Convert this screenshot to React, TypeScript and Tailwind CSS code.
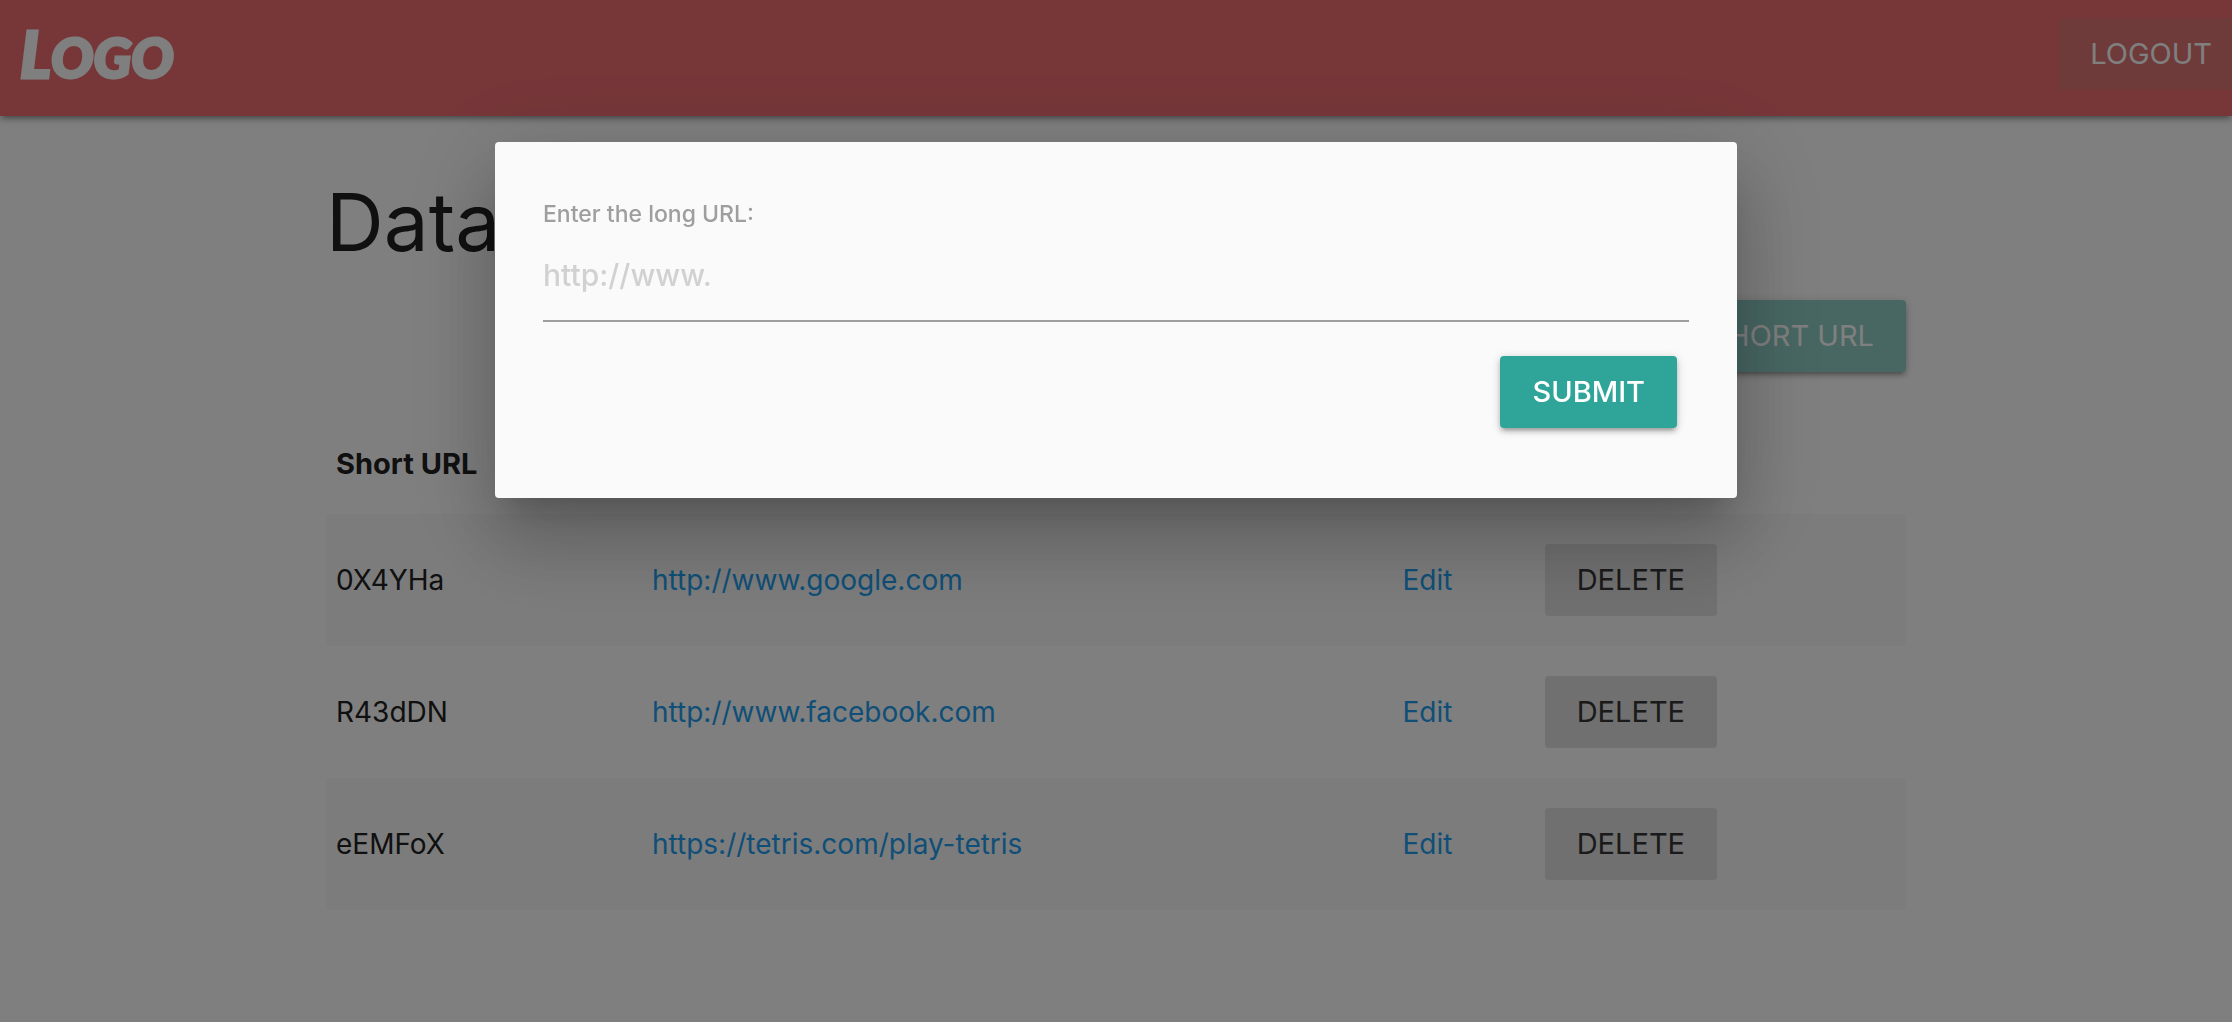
const links = [
  { code: '0X4YHa', url: 'http://www.google.com' },
  { code: 'R43dDN', url: 'http://www.facebook.com' },
  { code: 'eEMFoX', url: 'https://tetris.com/play-tetris' },
];

const raised =
  'shadow-[0_4px_4px_0_rgba(0,0,0,0.14),0_6px_2px_-4px_rgba(0,0,0,0.12),0_2px_10px_0_rgba(0,0,0,0.2)]';

function Header() {
  return (
    <header className={`flex h-29 items-start justify-between bg-[#ee6e73] text-white ${raised}`}>
      <a
        href="#"
        className="block pt-4 pl-5 font-['Lato'] text-[56px] leading-[76px] font-black uppercase italic [-webkit-text-stroke:3px_white] [paint-order:stroke_fill] first-letter:text-[64px]"
      >
        Logo
      </a>
      <button
        type="button"
        className="mt-[18px] h-18 rounded-l bg-[#de7674] pr-5 pl-8 text-[29px] uppercase"
      >
        Logout
      </button>
    </header>
  );
}

function LinkTable() {
  return (
    <table className="w-full table-fixed border-collapse text-left text-[28px] leading-[44px]">
      <colgroup>
        <col className="w-[20%]" />
        <col className="w-[47.5%]" />
        <col className="w-[9%]" />
        <col />
      </colgroup>
      <thead>
        <tr>
          <th scope="col" className="px-2.5 py-7 text-[29px] font-bold">Short URL</th>
          <th />
          <th />
          <th />
        </tr>
      </thead>
      <tbody>
        {links.map((link) => (
          <tr key={link.code} className="odd:bg-[#f8f8f8]">
            <td className="px-2.5">{link.code}</td>
            <td className="px-2.5">
              <a href={link.url} className="text-[#1f9eee]">{link.url}</a>
            </td>
            <td className="px-2.5">
              <a href="#edit" className="text-[#1f9eee]">Edit</a>
            </td>
            <td className="h-33 px-2.5">
              <button
                type="button"
                className="block h-18 rounded bg-[#e0e0e0] px-8 text-[29px] text-[#343434] uppercase"
              >
                Delete
              </button>
            </td>
          </tr>
        ))}
      </tbody>
    </table>
  );
}

function UrlDialog() {
  return (
    <div className="fixed inset-0 flex items-start justify-center bg-black/50 pt-[142px]">
      <div
        role="dialog"
        aria-modal="true"
        aria-labelledby="long-url-label"
        className="w-full max-w-[1242px] rounded bg-[#fafafa] shadow-[0_48px_76px_6px_rgba(0,0,0,0.14),0_18px_92px_16px_rgba(0,0,0,0.12),0_22px_30px_-14px_rgba(0,0,0,0.2)]"
      >
        <form className="flex flex-col px-12 pt-14 pb-[70px]">
          <label
            id="long-url-label"
            htmlFor="long-url"
            className="text-[23px] leading-8 font-medium text-[#9e9e9e]"
          >
            Enter the long URL:
          </label>
          <input
            id="long-url"
            type="text"
            placeholder="http://www."
            className="h-23 border-b-2 border-[#9e9e9e] bg-transparent text-[30px] font-medium outline-none placeholder:text-[#d1d1d1]"
          />
          <button
            type="button"
            className={`mt-[34px] mr-3 h-18 self-end rounded bg-[#2fa599] px-8 text-[29px] font-medium text-white uppercase ${raised}`}
          >
            Submit
          </button>
        </form>
      </div>
    </div>
  );
}

export default function App() {
  return (
    <div className="min-h-screen bg-white font-['Inter',sans-serif] text-[#212121]">
      <Header />
      <main className="mx-auto max-w-[1580px]">
        <h1 className="pt-[60px] text-[80px] leading-[92px]">Data</h1>
        <div className="mt-8 mb-[42px] flex justify-end">
          <button
            type="button"
            className={`h-18 rounded bg-[#90cec6] px-8 text-[29px] text-white uppercase ${raised}`}
          >
            Short URL
          </button>
        </div>
        <LinkTable />
      </main>
      <UrlDialog />
    </div>
  );
}
